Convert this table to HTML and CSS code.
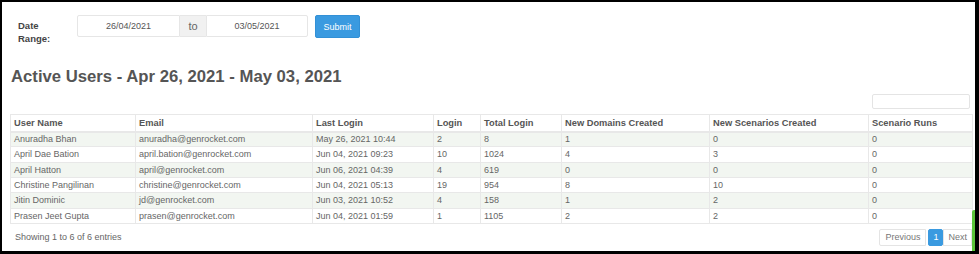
FILE: index.html
```html
<!DOCTYPE html>
<html lang="en">
<head>
    <meta charset="UTF-8">
    <title>Active Users</title>
    <link rel="stylesheet" href="styles.css">
</head>
<body>

    <div class="page">
        <!-- Date filter -->
        <form class="date-form">
            <label class="date-label">Date<br>Range:</label>
            <div class="input-group">
                <input class="date-input" type="text" value="26/04/2021">
                <span class="addon">to</span>
                <input class="date-input" type="text" value="03/05/2021">
            </div>
            <button type="button" class="btn-submit">Submit</button>
        </form>

        <h2 class="title">Active Users - Apr 26, 2021 - May 03, 2021</h2>

        <div class="search-row">
            <input class="search" type="text">
        </div>

        <table class="users">
            <thead>
                <tr>
                    <th>User Name</th>
                    <th>Email</th>
                    <th>Last Login</th>
                    <th>Login</th>
                    <th>Total Login</th>
                    <th>New Domains Created</th>
                    <th>New Scenarios Created</th>
                    <th>Scenario Runs</th>
                </tr>
            </thead>
            <tbody>
                <tr><td>Anuradha Bhan</td><td>anuradha@genrocket.com</td><td>May 26, 2021 10:44</td><td>2</td><td>8</td><td>1</td><td>0</td><td>0</td></tr>
                <tr><td>April Dae Bation</td><td>april.bation@genrocket.com</td><td>Jun 04, 2021 09:23</td><td>10</td><td>1024</td><td>4</td><td>3</td><td>0</td></tr>
                <tr><td>April Hatton</td><td>april@genrocket.com</td><td>Jun 06, 2021 04:39</td><td>4</td><td>619</td><td>0</td><td>0</td><td>0</td></tr>
                <tr><td>Christine Pangilinan</td><td>christine@genrocket.com</td><td>Jun 04, 2021 05:13</td><td>19</td><td>954</td><td>8</td><td>10</td><td>0</td></tr>
                <tr><td>Jitin Dominic</td><td>jd@genrocket.com</td><td>Jun 03, 2021 10:52</td><td>4</td><td>158</td><td>1</td><td>2</td><td>0</td></tr>
                <tr><td>Prasen Jeet Gupta</td><td>prasen@genrocket.com</td><td>Jun 04, 2021 01:59</td><td>1</td><td>1105</td><td>2</td><td>2</td><td>0</td></tr>
            </tbody>
        </table>

        <div class="table-footer">
            <div class="info">Showing 1 to 6 of 6 entries</div>
            <div class="pager">
                <span class="page-btn">Previous</span>
                <span class="page-btn active">1</span>
                <span class="page-btn">Next</span>
            </div>
        </div>

        <!-- scroll indicator -->
        <div class="side-bar"></div>
    </div>

</body>
</html>
```

FILE: styles.css
```css
/* Global Styles */
body {
    margin: 0;
    background-color: #000;
    font-family: "Liberation Sans", Arial, sans-serif;
    color: #666;
}

.page {
    position: relative;
    background-color: #fff;
    margin: 2px 4px 0 2px;
    height: 249px;
    overflow: hidden;
}

/* Date filter */
.date-form {
    display: flex;
    align-items: flex-start;
    padding: 13px 0 0 16px;
    margin: 0;
}

.date-label {
    width: 59px;
    margin-top: 4px;
    font-size: 9.5px;
    line-height: 13px;
    font-weight: bold;
    color: #444;
}

.input-group {
    display: flex;
    height: 22px;
}

.date-input {
    box-sizing: border-box;
    height: 22px;
    padding: 0;
    border: 1px solid #e6e6e6;
    font-family: inherit;
    font-size: 9px;
    color: #555;
    text-align: center;
    outline: none;
}

.date-input:first-child {
    width: 103px;
    border-radius: 2px 0 0 2px;
}

.date-input:last-child {
    width: 102px;
    border-radius: 0 2px 2px 0;
}

.addon {
    box-sizing: border-box;
    width: 26px;
    height: 22px;
    line-height: 20px;
    text-align: center;
    background-color: #f1f1f1;
    border-top: 1px solid #e6e6e6;
    border-bottom: 1px solid #e6e6e6;
    font-size: 11px;
    color: #666;
}

.btn-submit {
    margin-left: 7px;
    width: 45px;
    height: 23px;
    padding: 0;
    border: 1px solid #3290d6;
    border-radius: 2px;
    background-color: #3a9ae0;
    color: #fff;
    font-family: inherit;
    font-size: 9px;
}

/* Heading */
.title {
    margin: 22px 0 0 9px;
    font-size: 16.7px;
    line-height: 20px;
    font-weight: bold;
    color: #555;
}

/* Search */
.search-row {
    display: flex;
    justify-content: flex-end;
    margin-top: 7px;
    padding-right: 5px;
}

.search {
    box-sizing: border-box;
    width: 98px;
    height: 15px;
    border: 1px solid #e4e4e4;
    border-radius: 2px;
    outline: none;
}

/* Table */
.users {
    margin: 5px 0 0 8px;
    width: 963px;
    border-collapse: collapse;
    table-layout: fixed;
    font-size: 9px;
}

.users th,
.users td {
    box-sizing: border-box;
    text-align: left;
    padding: 0 3px;
    border: 1px solid #e8e8e8;
    white-space: nowrap;
    overflow: hidden;
}

.users th:nth-child(1) { width: 125px; }
.users th:nth-child(2) { width: 177px; }
.users th:nth-child(3) { width: 121px; }
.users th:nth-child(4) { width: 47px; }
.users th:nth-child(5) { width: 81px; }
.users th:nth-child(6) { width: 148px; }
.users th:nth-child(7) { width: 159px; }

.users th {
    height: 17px;
    font-size: 9.3px;
    color: #555;
    border-bottom-width: 2px;
}

.users td {
    height: 15.33px;
    color: #666;
}

.users tbody tr:nth-child(odd) td {
    background-color: #f2f6f1;
}

/* Footer */
.table-footer {
    display: flex;
    justify-content: space-between;
    align-items: center;
    margin: 5px 0 0 13px;
    padding-right: 3px;
}

.info {
    font-size: 9px;
    color: #666;
}

.pager {
    display: flex;
}

.page-btn {
    box-sizing: border-box;
    height: 17px;
    line-height: 15px;
    padding: 0 4px;
    border: 1px solid #e4e4e4;
    font-size: 9px;
    color: #777;
}

.page-btn:first-child {
    padding: 0 5px;
    border-radius: 2px 0 0 2px;
    margin-right: 2px;
}

.page-btn.active {
    background-color: #3a9ae0;
    border-color: #3a9ae0;
    color: #fff;
    border-radius: 2px;
}

.side-bar {
    position: absolute;
    right: 0;
    bottom: 0;
    width: 3px;
    height: 41px;
    background-color: #5cc43a;
    border-radius: 2px 0 0 0;
}
```
